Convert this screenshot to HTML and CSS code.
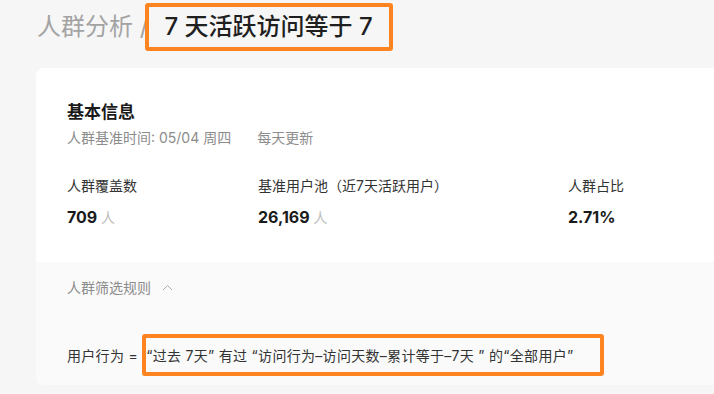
FILE: index.html
```html
<!DOCTYPE html>
<html lang="zh-CN">
<head>
    <meta charset="UTF-8">
    <meta name="viewport" content="width=device-width, initial-scale=1.0">
    <title>人群分析</title>
    <link rel="stylesheet" href="styles.css">
</head>
<body>
    <div class="breadcrumb">
        <span class="crumb-parent">人群分析 /</span>
        <span class="crumb-current mark-title">7 天活跃访问等于 7</span>
    </div>

    <div class="card">
        <div class="basic-info">
            <h3 class="section-title">基本信息</h3>
            <div class="sub-line">
                <span>人群基准时间: 05/04 周四</span>
                <span>每天更新</span>
            </div>

            <div class="stats">
                <div class="stat-group">
                    <span class="stat-label">人群覆盖数</span>
                    <span class="stat-value">709 <span class="unit">人</span></span>
                </div>
                <div class="stat-group">
                    <span class="stat-label">基准用户池（近7天活跃用户）</span>
                    <span class="stat-value">26,169 <span class="unit">人</span></span>
                </div>
                <div class="stat-group">
                    <span class="stat-label">人群占比</span>
                    <span class="stat-value">2.71%</span>
                </div>
            </div>
        </div>

        <div class="rules">
            <div class="rules-toggle">
                人群筛选规则
                <svg class="caret" width="11" height="7" viewBox="0 0 11 7">
                    <path d="M1 6 L5.5 1.5 L10 6" fill="none" stroke="#aaa" stroke-width="1"/>
                </svg>
            </div>
            <div class="rule-line">
                用户行为 = <span class="mark-rule">“过去 7天” 有过 “访问行为–访问天数–累计等于–7天 ” 的“全部用户”</span>
            </div>
        </div>
    </div>
</body>
</html>
```

FILE: styles.css
```css
body {
    margin: 0;
    background-color: #f6f6f6;
    font-family: Inter, "Noto Sans CJK SC", sans-serif;
    color: #333;
    overflow: hidden;
}

.breadcrumb {
    display: flex;
    align-items: center;
    gap: 9px;
    height: 54px;
    padding-left: 37px;
    font-size: 24px;
    line-height: 24px;
}

.crumb-parent {
    color: #a3a3a3;
}

.crumb-current {
    color: #1f1f1f;
    font-weight: 500;
    margin-left: 7px;
}

/* orange annotation boxes */
.mark-title,
.mark-rule {
    position: relative;
}

.mark-title::after,
.mark-rule::after {
    content: "";
    position: absolute;
    border: 4px solid #fd8421;
    border-radius: 3px;
}

.mark-title::after {
    left: -19px;
    right: -20px;
    top: -12px;
    bottom: -12px;
}

.mark-rule {
    margin-left: 4px;
}

.mark-rule::after {
    left: -4px;
    right: -31px;
    top: -13px;
    bottom: -12px;
}

.card {
    margin: 14px -20px 0 36px;
    background-color: #fff;
    border-radius: 8px;
    overflow: hidden;
}

.basic-info {
    padding: 32px 31px 32px;
}

.section-title {
    margin: 0;
    font-size: 17px;
    line-height: 24px;
    font-weight: bold;
    color: #1a1a1a;
}

.sub-line {
    display: flex;
    gap: 26px;
    margin-top: 4px;
    font-size: 14px;
    line-height: 20px;
    color: #8c8c8c;
}

.stats {
    display: grid;
    grid-template-columns: 191px 310px 1fr;
    margin-top: 28px;
}

.stat-group {
    display: flex;
    flex-direction: column;
    gap: 9px;
}

.stat-label {
    font-size: 14px;
    line-height: 20px;
    color: #333;
}

.stat-value {
    font-size: 16px;
    line-height: 24px;
    font-weight: bold;
    color: #1a1a1a;
}

.unit {
    font-size: 14px;
    font-weight: normal;
    color: #bdbdbd;
}

.rules {
    background-color: #fafafa;
    padding: 16px 31px 19px;
}

.rules-toggle {
    display: flex;
    align-items: center;
    font-size: 14px;
    line-height: 20px;
    color: #8c8c8c;
}

.caret {
    margin-left: 11px;
    margin-top: -2px;
}

.rule-line {
    margin-top: 48px;
    font-size: 14px;
    line-height: 20px;
    letter-spacing: 0.3px;
    color: #333;
}
```
